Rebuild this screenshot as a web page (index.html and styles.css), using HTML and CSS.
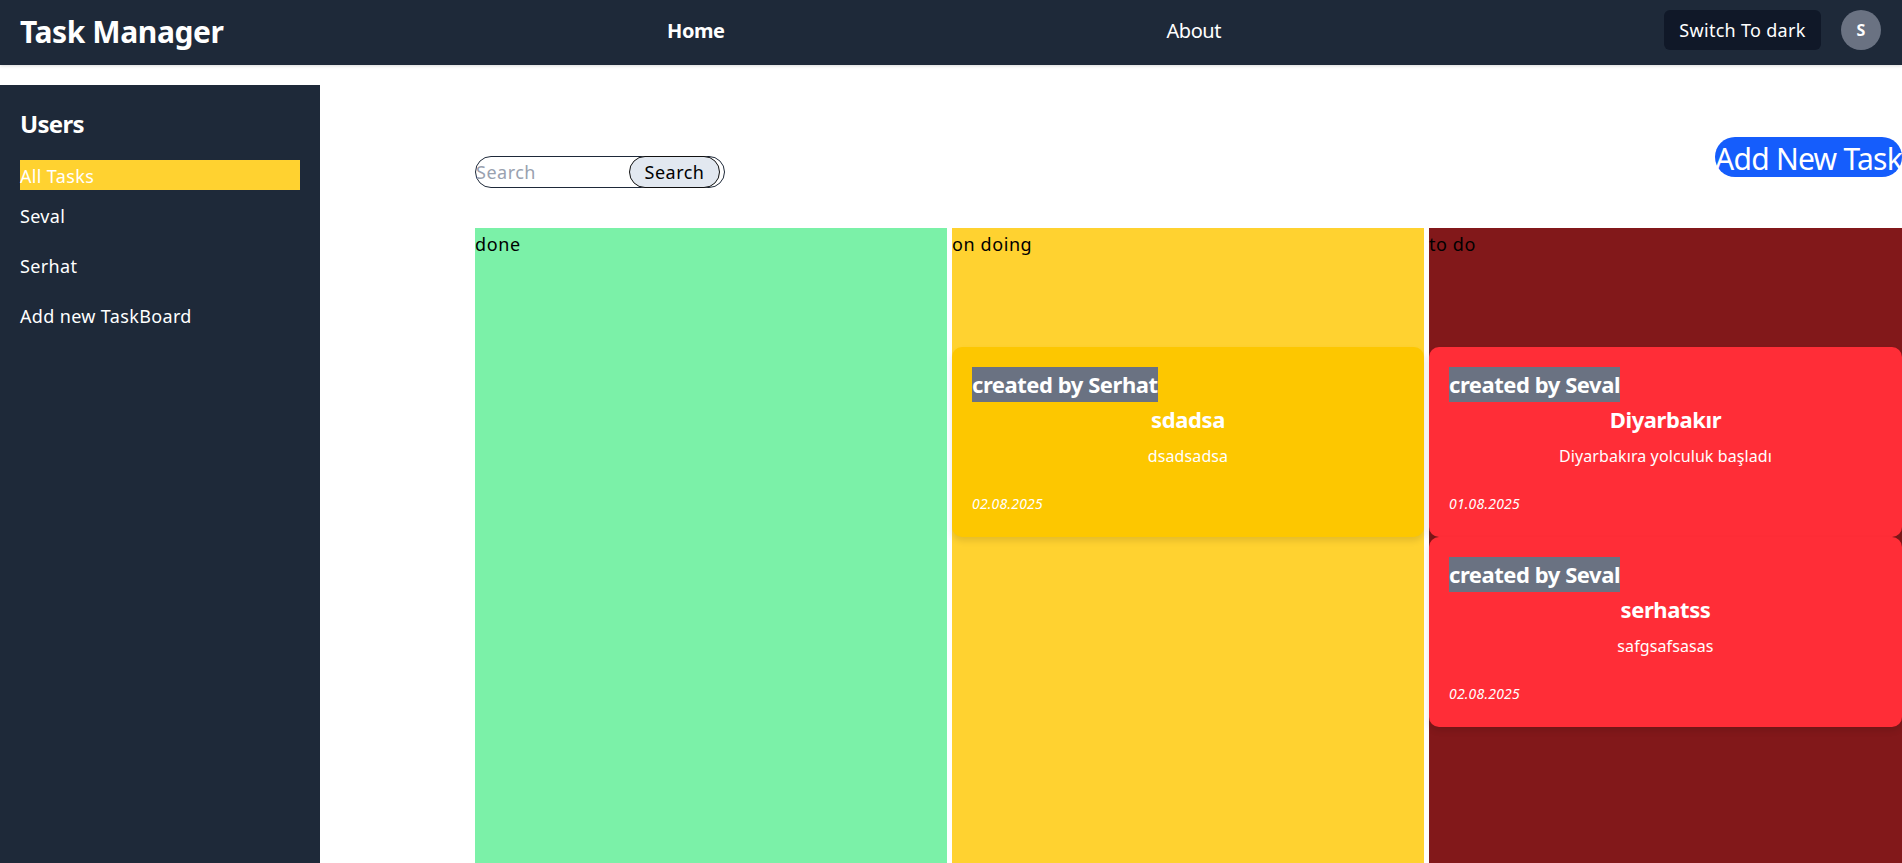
FILE: index.html
```html
<!DOCTYPE html>
<html lang="en">
<head>
  <meta charset="UTF-8">
  <meta name="viewport" content="width=device-width, initial-scale=1.0">
  <title>Task Manager</title>
  <link rel="stylesheet" href="styles.css">
</head>
<body>

  <header class="topbar">
    <div class="brand">Task Manager</div>
    <nav class="nav">
      <a class="nav-link active" href="#">Home</a>
      <a class="nav-link" href="#">About</a>
    </nav>
    <div class="topbar-right">
      <button class="theme-btn">Switch To dark</button>
      <div class="avatar">S</div>
    </div>
  </header>

  <div class="layout">
    <aside class="sidebar">
      <h3 class="sidebar-title">Users</h3>
      <ul class="user-list">
        <li class="user-item selected">All Tasks</li>
        <li class="user-item">Seval</li>
        <li class="user-item">Serhat</li>
        <li class="user-item">Add new TaskBoard</li>
      </ul>
    </aside>

    <main class="content">
      <div class="toolbar">
        <form class="search">
          <input class="search-input" type="text" placeholder="Search">
          <button class="search-btn" type="button">Search</button>
        </form>
        <button class="add-btn">Add New Task</button>
      </div>

      <div class="board">
        <section class="column col-done">
          <div class="column-title">done</div>
        </section>

        <section class="column col-doing">
          <div class="column-title">on doing</div>
          <div class="cards">
            <article class="card card-doing">
              <div class="card-owner"><span class="owner-tag">created by Serhat</span></div>
              <h4 class="card-title">sdadsa</h4>
              <p class="card-text">dsadsadsa</p>
              <div class="card-date">02.08.2025</div>
            </article>
          </div>
        </section>

        <section class="column col-todo">
          <div class="column-title">to do</div>
          <div class="cards">
            <article class="card card-todo">
              <div class="card-owner"><span class="owner-tag">created by Seval</span></div>
              <h4 class="card-title">Diyarbakır</h4>
              <p class="card-text">Diyarbakıra yolculuk başladı</p>
              <div class="card-date">01.08.2025</div>
            </article>
            <article class="card card-todo">
              <div class="card-owner"><span class="owner-tag">created by Seval</span></div>
              <h4 class="card-title">serhatss</h4>
              <p class="card-text">safgsafsasas</p>
              <div class="card-date">02.08.2025</div>
            </article>
          </div>
        </section>
      </div>
    </main>
  </div>

</body>
</html>
```

FILE: styles.css
```css
* {
  box-sizing: border-box;
}
html, body {
  height: 100%;
}
body {
  margin: 0;
  font-family: "Noto Sans", "Open Sans", sans-serif;
  background-color: #fff;
  overflow: hidden;
}

/* top bar */
.topbar {
  height: 65px;
  padding: 0 21px 5px 20px;
  display: flex;
  align-items: center;
  justify-content: space-between;
  background-color: #1e2939;
  color: #fff;
  box-shadow: 0 1px 3px rgba(0, 0, 0, 0.15);
}
.brand {
  width: 204px;
  padding-top: 2px;
  font-size: 30px;
  font-weight: 700;
  letter-spacing: -0.4px;
  white-space: nowrap;
}
.nav {
  width: 996px;
  display: flex;
  justify-content: space-around;
}
.nav-link {
  font-size: 20px;
  letter-spacing: -0.5px;
  color: #fff;
  text-decoration: none;
}
.nav-link.active {
  font-weight: 700;
}
.topbar-right {
  display: flex;
  align-items: center;
  gap: 20px;
}
.theme-btn {
  width: 157px;
  height: 40px;
  padding: 0;
  font-family: inherit;
  font-size: 18px;
  letter-spacing: 0.3px;
  color: #fff;
  background-color: #101828;
  border: none;
  border-radius: 6px;
}
.avatar {
  width: 40px;
  height: 40px;
  display: flex;
  align-items: center;
  justify-content: center;
  font-size: 16px;
  font-weight: 700;
  background-color: #6a7282;
  border-radius: 50%;
}

/* page body */
.layout {
  height: calc(100% - 85px);
  margin-top: 20px;
  display: flex;
}
.sidebar {
  width: 320px;
  padding: 20px;
  flex-shrink: 0;
  background-color: #1e2939;
  color: #fff;
}
.sidebar-title {
  height: 35px;
  margin: 0 0 20px;
  font-size: 24px;
  line-height: 38px;
  font-weight: 700;
  letter-spacing: -0.7px;
}
.user-list {
  margin: 0;
  padding: 0;
  list-style: none;
}
.user-item {
  height: 30px;
  margin-bottom: 20px;
  font-size: 18px;
  line-height: 32px;
  letter-spacing: 0.35px;
  white-space: nowrap;
}
.user-item.selected {
  margin-bottom: 10px;
  background-color: #ffd230;
}

.content {
  flex: 1;
  min-width: 0;
  padding-left: 155px;
}
.toolbar {
  height: 143px;
  display: flex;
  justify-content: space-between;
  align-items: flex-start;
  padding-top: 52px;
}
.search {
  width: 250px;
  height: 32px;
  margin-top: 19px;
  display: flex;
  justify-content: space-between;
  padding-right: 4px;
  border: 1px solid #1e2939;
  border-radius: 16px;
}
.search-input {
  width: 150px;
  padding: 0;
  font-family: inherit;
  font-size: 18px;
  letter-spacing: 0.5px;
  border: none;
  outline: none;
  background: transparent;
}
.search-input::placeholder {
  color: #99a1af;
}
.search-btn {
  width: 91px;
  margin: -1px 0;
  padding: 0;
  font-family: inherit;
  font-size: 18px;
  letter-spacing: 0.5px;
  color: #000;
  background-color: #e2e8f0;
  border: 1px solid #111;
  border-radius: 16px;
}
.add-btn {
  width: 187px;
  height: 40px;
  padding: 2px 0 0;
  font-family: inherit;
  font-size: 30px;
  line-height: 40px;
  letter-spacing: -0.75px;
  white-space: nowrap;
  color: #fff;
  background-color: #155dfc;
  border: none;
  border-radius: 20px;
}

/* task board */
.board {
  height: calc(100% - 143px);
  display: grid;
  grid-template-columns: 472px 472px 1fr;
  gap: 5px;
}
.column-title {
  height: 119px;
  padding-top: 2px;
  font-size: 18px;
  line-height: 28px;
  letter-spacing: 0.6px;
  color: #000;
}
.col-done {
  background-color: #7bf1a8;
}
.col-doing {
  background-color: #ffd230;
}
.col-todo {
  background-color: #82181a;
}
.card {
  height: 190px;
  padding: 20px;
  color: #fff;
  border-radius: 10px;
  box-shadow: 0 4px 6px rgba(0, 0, 0, 0.1);
}
.card-doing {
  background-color: #fdc700;
}
.card-todo {
  background-color: #ff2d37;
}
.card-owner {
  height: 35px;
}
.owner-tag {
  display: inline-block;
  height: 35px;
  font-size: 22px;
  line-height: 35px;
  font-weight: 700;
  letter-spacing: -0.45px;
  background-color: #6a7282;
}
.card-title {
  margin: 0 0 2px;
  font-size: 22px;
  line-height: 34px;
  font-weight: 700;
  letter-spacing: -0.4px;
  text-align: center;
}
.card-text {
  margin: 0;
  height: 36px;
  font-size: 16px;
  line-height: 36px;
  letter-spacing: 0.1px;
  text-align: center;
}
.card-date {
  margin-top: 20px;
  font-size: 14px;
  line-height: 20px;
  font-style: italic;
  letter-spacing: 0.2px;
}
```
